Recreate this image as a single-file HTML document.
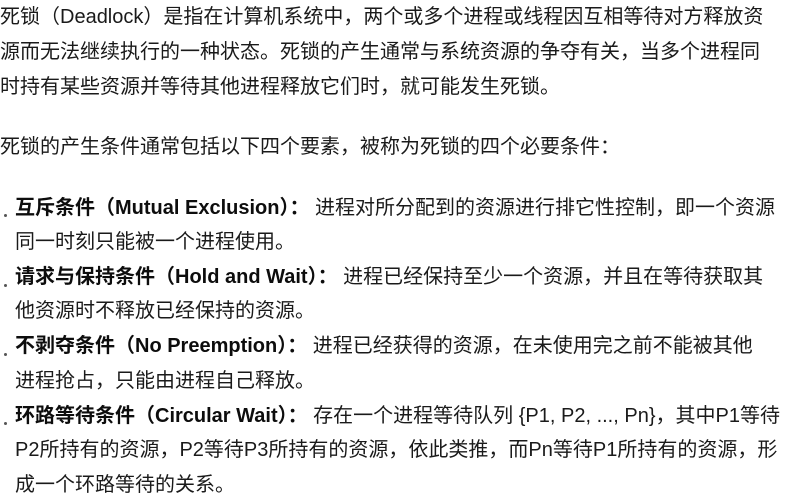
<!DOCTYPE html>
<html><head><meta charset="utf-8"><style>
body{margin:0;width:786px;height:500px;background:#fff;overflow:hidden;position:relative;font-family:"Liberation Sans","Noto Sans CJK SC",sans-serif;font-size:20px;color:#1a1a1a}
.l{position:absolute;left:0;white-space:nowrap;line-height:34px;height:34px}
.i{left:15px}
b{font-weight:bold;color:#0d0d0d}
.d{position:absolute;left:4px;width:3px;height:3px;background:#555;border-radius:50%}
</style></head><body>
<div class="l" style="top:0">死锁（Deadlock）是指在计算机系统中，两个或多个进程或线程因互相等待对方释放资</div>
<div class="l" style="top:35px">源而无法继续执行的一种状态。死锁的产生通常与系统资源的争夺有关，当多个进程同</div>
<div class="l" style="top:70px">时持有某些资源并等待其他进程释放它们时，就可能发生死锁。</div>
<div class="l" style="top:130px">死锁的产生条件通常包括以下四个要素，被称为死锁的四个必要条件：</div>
<div class="d" style="top:214px"></div>
<div class="l i" style="top:191px"><b>互斥条件（Mutual Exclusion）：</b> 进程对所分配到的资源进行排它性控制，即一个资源</div>
<div class="l i" style="top:225px">同一时刻只能被一个进程使用。</div>
<div class="d" style="top:284px"></div>
<div class="l i" style="top:260px"><b>请求与保持条件（Hold and Wait）：</b> 进程已经保持至少一个资源，并且在等待获取其</div>
<div class="l i" style="top:294px">他资源时不释放已经保持的资源。</div>
<div class="d" style="top:353px"></div>
<div class="l i" style="top:329px"><b>不剥夺条件（No Preemption）：</b> 进程已经获得的资源，在未使用完之前不能被其他</div>
<div class="l i" style="top:364px">进程抢占，只能由进程自己释放。</div>
<div class="d" style="top:422px"></div>
<div class="l i" style="top:399px"><b>环路等待条件（Circular Wait）：</b> 存在一个进程等待队列 {P1, P2, ..., Pn}，其中P1等待</div>
<div class="l i" style="top:433px">P2所持有的资源，P2等待P3所持有的资源，依此类推，而Pn等待P1所持有的资源，形</div>
<div class="l i" style="top:468px">成一个环路等待的关系。</div>
</body></html>
